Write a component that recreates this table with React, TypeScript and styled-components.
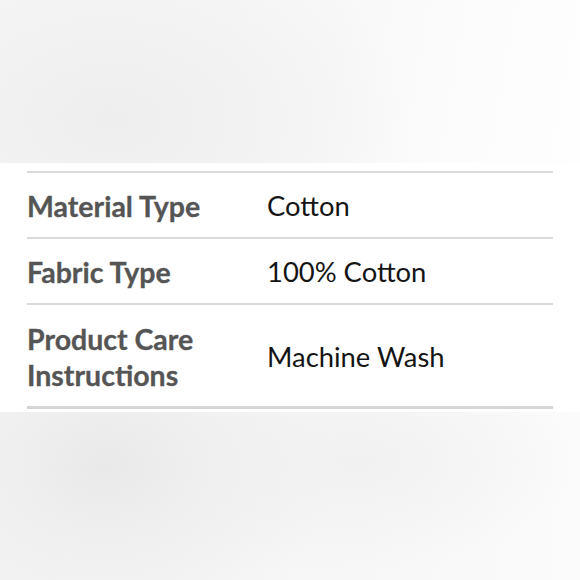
import React from 'react';
import styled, { createGlobalStyle } from 'styled-components';

type Detail = {
  label: string[];
  value: string;
  tall?: boolean;
};

const details: Detail[] = [
  { label: ['Material Type'], value: 'Cotton' },
  { label: ['Fabric Type'], value: '100% Cotton' },
  { label: ['Product Care', 'Instructions'], value: 'Machine Wash', tall: true },
];

const GlobalStyle = createGlobalStyle`
  html, body {
    margin: 0;
    padding: 0;
    background: #fafafa;
  }
  body {
    font-family: Lato, "Noto Sans", sans-serif;
  }
`;

const Page = styled.div`
  width: 580px;
  height: 580px;
  display: flex;
  flex-direction: column;
  overflow: hidden;
`;

const Blur = styled.div<{ bottom?: boolean }>`
  height: ${props => (props.bottom ? '168px' : '163px')};
  flex-shrink: 0;
  background: ${props =>
    props.bottom
      ? `radial-gradient(ellipse 230px 170px at 105px 55px, #e9e9e9 0%, #efefef 40%, rgba(245,245,245,0) 100%),
         radial-gradient(ellipse 220px 110px at 355px 50px, #f1f1f1 0%, rgba(246,246,246,0) 100%),
         linear-gradient(90deg, #f4f4f4 0%, #f7f7f7 60%, #fbfbfb 100%)`
      : `radial-gradient(ellipse 300px 200px at 110px 120px, #eeeeee 0%, #f2f2f2 45%, rgba(248,248,248,0) 100%),
         linear-gradient(100deg, #f6f6f6 0%, #f8f8f8 55%, #fcfcfc 80%, #fefefe 100%)`};
`;

const Sheet = styled.section`
  background: #ffffff;
  padding: 8px 27px 3px;
`;

const Table = styled.div`
  display: flex;
  flex-direction: column;
  border-bottom: 3px solid #d5d5d5;
`;

const Row = styled.div<{ tall?: boolean }>`
  display: grid;
  grid-template-columns: 240px 1fr;
  align-items: center;
  height: ${props => (props.tall ? '101px' : '64px')};
  border-top: 2px solid #dadada;
`;

const Label = styled.div`
  font-weight: 700;
  font-size: 28.5px;
  line-height: 36px;
  color: #555555;
  padding-top: 2px;
  -webkit-text-stroke: 0.3px #555555;
`;

const Value = styled.div`
  font-size: 27.4px;
  line-height: 36px;
  color: #141414;
  padding-top: 2px;
`;

export default function App() {
  return (
    <Page>
      <GlobalStyle />
      <Blur />
      <Sheet>
        <Table>
          {details.map(d => (
            <Row key={d.value} tall={d.tall}>
              <Label>
                {d.label.map(line => (
                  <div key={line}>{line}</div>
                ))}
              </Label>
              <Value>{d.value}</Value>
            </Row>
          ))}
        </Table>
      </Sheet>
      <Blur bottom />
    </Page>
  );
}
